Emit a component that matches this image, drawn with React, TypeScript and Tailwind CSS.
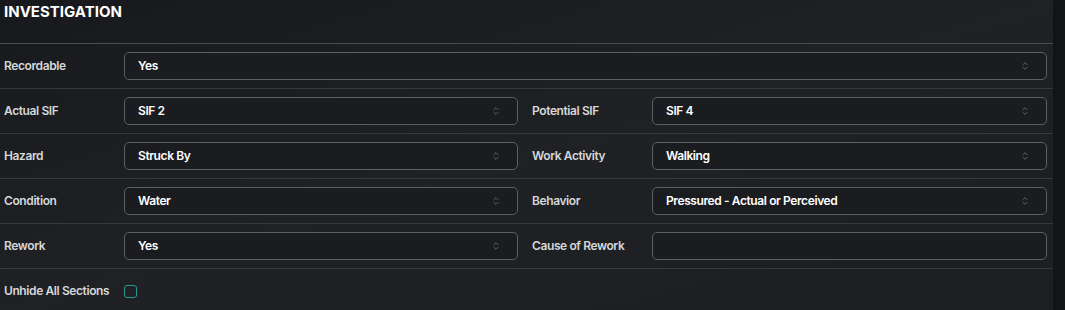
import React from 'react';
import { ChevronsUpDown } from 'lucide-react';

interface FieldProps {
  label: string;
  value?: string;
  select?: boolean;
}

const Field: React.FC<FieldProps & { className?: string }> = ({ label, value, select = true, className }) => (
  <div className={`flex items-center min-w-0 ${className ?? ''}`}>
    <div className="w-[120px] shrink-0 text-[12px] font-semibold tracking-[-0.4px] text-[#d6d7d9]">{label}</div>
    <div className="flex-1 h-[28px] rounded-[5px] border border-[#5b5e63] bg-[#1a1c1f] flex items-center justify-between pl-[13px] pr-[16px]">
      <span className="text-[12px] font-semibold tracking-[-0.4px] text-white">{value}</span>
      {select && <ChevronsUpDown size={10} strokeWidth={1.5} className="text-[#8a8c90]" />}
    </div>
  </div>
);

const rows: FieldProps[][] = [
  [{ label: 'Recordable', value: 'Yes' }],
  [
    { label: 'Actual SIF', value: 'SIF 2' },
    { label: 'Potential SIF', value: 'SIF 4' },
  ],
  [
    { label: 'Hazard', value: 'Struck By' },
    { label: 'Work Activity', value: 'Walking' },
  ],
  [
    { label: 'Condition', value: 'Water' },
    { label: 'Behavior', value: 'Pressured - Actual or Perceived' },
  ],
  [
    { label: 'Rework', value: 'Yes' },
    { label: 'Cause of Rework', value: '', select: false },
  ],
];

export default function App() {
  return (
    <div
      className="w-[1065px] h-[310px] flex bg-[#121416] overflow-hidden"
      style={{ fontFamily: 'Inter, "Noto Sans", sans-serif' }}
    >
      <div className="w-[1053px] shrink-0 flex flex-col bg-gradient-to-br from-[#17191c] via-[#1f2124] to-[#1c1e21]">
        <h1 className="h-[43px] shrink-0 pl-[4px] pt-[1px] text-[15px] font-bold text-white">INVESTIGATION</h1>
        <div className="shrink-0 border-t border-[#4a4c50]">
          {rows.map((row, i) => (
            <div key={i} className="flex items-center gap-[14px] pl-[4px] pr-[6px] py-[8px] border-b border-[#36383c]">
              {row.length === 1 ? (
                <Field {...row[0]} className="flex-1" />
              ) : (
                <>
                  <Field {...row[0]} className="w-[514px] shrink-0" />
                  <Field {...row[1]} className="flex-1" />
                </>
              )}
            </div>
          ))}
          <div className="flex items-center h-[44px] pl-[4px]">
            <div className="w-[120px] text-[12px] font-semibold tracking-[-0.4px] text-[#d6d7d9]">Unhide All Sections</div>
            <div className="w-[13px] h-[13px] rounded-[3px] border border-[#2a9a90]" />
          </div>
        </div>
      </div>
    </div>
  );
}
